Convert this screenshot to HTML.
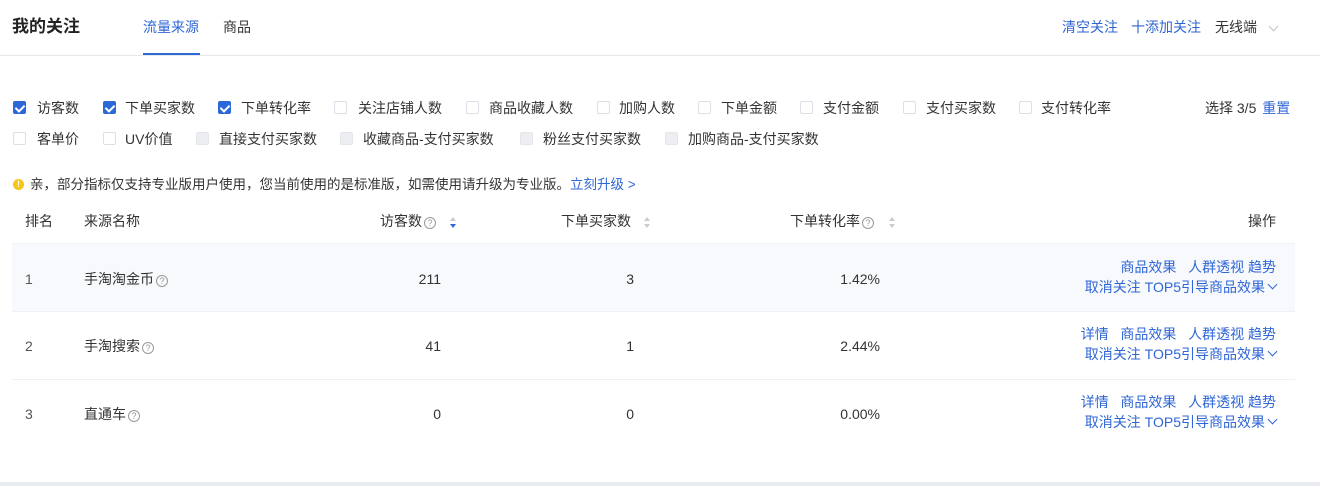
<!DOCTYPE html>
<html><head><meta charset="utf-8"><style>
*{margin:0;padding:0;box-sizing:border-box}
body{width:1320px;height:486px;background:#fff;position:relative;overflow:hidden;font-family:"Liberation Sans","Noto Sans CJK SC",sans-serif;font-size:14px;color:#333}
.a{position:absolute;white-space:nowrap;line-height:20px}
.b{color:#2f66d6}
.cb{position:absolute;width:13px;height:13px;border:1px solid #dcdfe6;border-radius:2px;background:#fff}
.cb.on{background:#2d68d8;border-color:#2d68d8}
.cb.on:after{content:"";position:absolute;left:3px;top:1px;width:4px;height:7px;border:solid #fff;border-width:0 2px 2px 0;transform:rotate(45deg)}
.cb.dis{background:#eceef1;border-color:#e4e6ea}
.q{display:inline-block;width:12px;height:12px;border:1px solid #999;border-radius:50%;font-size:9px;line-height:10px;text-align:center;color:#999;vertical-align:0px;margin-left:2px}
.s{position:absolute;width:7px;height:11px}
.s:before,.s:after{content:"";position:absolute;left:0;border-left:3.5px solid transparent;border-right:3.5px solid transparent}
.s:before{top:0;border-bottom:4px solid #c8ccd3}
.s:after{bottom:0;border-top:4px solid #c8ccd3}
.s.d:after{border-top-color:#2d68d8}
.hr{position:absolute;left:12px;width:1283px;height:1px;background:#eef0f3}
.ch{display:inline-block;width:7px;height:7px;border:solid #2f66d6;border-width:0 1px 1px 0;transform:rotate(45deg);vertical-align:4px;margin-left:4px;margin-right:2px}
</style></head><body>
<div class="a" style="left:12px;top:16px;font-size:17px;font-weight:bold;line-height:22px;color:#222">我的关注</div>
<div class="a b" style="left:143px;top:17px">流量来源</div>
<div class="a" style="left:223px;top:17px">商品</div>
<div style="position:absolute;left:143px;top:53px;width:57px;height:2px;background:#2d68d8"></div>
<div style="position:absolute;left:0;top:55px;width:1320px;height:1px;background:#e6e8eb"></div>
<div class="a b" style="left:1062px;top:17px">清空关注</div>
<div class="a b" style="left:1131px;top:17px">十添加关注</div>
<div class="a" style="left:1215px;top:17px">无线端</div>
<div style="position:absolute;left:1270px;top:23px;width:7px;height:7px;border:solid #c0c4cc;border-width:0 1px 1px 0;transform:rotate(45deg)"></div>

<div class="cb on" style="left:13px;top:101px"></div><div class="a" style="left:37px;top:98px">访客数</div>
<div class="cb on" style="left:103px;top:101px"></div><div class="a" style="left:125px;top:98px">下单买家数</div>
<div class="cb on" style="left:218px;top:101px"></div><div class="a" style="left:241px;top:98px">下单转化率</div>
<div class="cb" style="left:334px;top:101px"></div><div class="a" style="left:358px;top:98px">关注店铺人数</div>
<div class="cb" style="left:466px;top:101px"></div><div class="a" style="left:489px;top:98px">商品收藏人数</div>
<div class="cb" style="left:597px;top:101px"></div><div class="a" style="left:619px;top:98px">加购人数</div>
<div class="cb" style="left:698px;top:101px"></div><div class="a" style="left:721px;top:98px">下单金额</div>
<div class="cb" style="left:800px;top:101px"></div><div class="a" style="left:823px;top:98px">支付金额</div>
<div class="cb" style="left:903px;top:101px"></div><div class="a" style="left:926px;top:98px">支付买家数</div>
<div class="cb" style="left:1019px;top:101px"></div><div class="a" style="left:1041px;top:98px">支付转化率</div>
<div class="a" style="left:1205px;top:98px">选择 3/5 <span class="b" style="margin-left:2px">重置</span></div>

<div class="cb" style="left:13px;top:132px"></div><div class="a" style="left:37px;top:129px">客单价</div>
<div class="cb" style="left:103px;top:132px"></div><div class="a" style="left:125px;top:129px">UV价值</div>
<div class="cb dis" style="left:196px;top:132px"></div><div class="a" style="left:219px;top:129px">直接支付买家数</div>
<div class="cb dis" style="left:340px;top:132px"></div><div class="a" style="left:363px;top:129px">收藏商品-支付买家数</div>
<div class="cb dis" style="left:520px;top:132px"></div><div class="a" style="left:543px;top:129px">粉丝支付买家数</div>
<div class="cb dis" style="left:665px;top:132px"></div><div class="a" style="left:688px;top:129px">加购商品-支付买家数</div>

<div style="position:absolute;left:13px;top:179px;width:11px;height:11px;border-radius:50%;background:#f5c518;color:#fff;font-size:9px;line-height:11px;text-align:center;font-weight:bold">!</div>
<div class="a" style="left:30px;top:175px;font-size:13.5px">亲，部分指标仅支持专业版用户使用，您当前使用的是标准版，如需使用请升级为专业版。<span class="b">立刻升级 &gt;</span></div>

<div class="a" style="left:25px;top:211px">排名</div>
<div class="a" style="left:84px;top:211px">来源名称</div>
<div class="a" style="left:380px;top:211px">访客数<span class="q">?</span></div><div class="s d" style="left:450px;top:217px"></div>
<div class="a" style="left:561px;top:211px">下单买家数</div><div class="s" style="left:644px;top:217px"></div>
<div class="a" style="left:790px;top:211px">下单转化率<span class="q">?</span></div><div class="s" style="left:889px;top:217px"></div>
<div class="a" style="right:44px;top:211px">操作</div>

<div style="position:absolute;left:12px;top:244px;width:1283px;height:67px;background:#f7f9fc"></div>
<div class="hr" style="top:243px;background:#f1f3f6"></div>
<div class="hr" style="top:311px"></div>
<div class="hr" style="top:379px"></div>

<div class="a" style="left:25px;top:269px;color:#555">1</div>
<div class="a" style="left:84px;top:269px">手淘淘金币<span class="q">?</span></div>
<div class="a" style="right:879px;top:269px">211</div>
<div class="a" style="right:686px;top:269px">3</div>
<div class="a" style="right:440px;top:269px">1.42%</div>
<div class="a b" style="right:44px;top:257px">商品效果 &nbsp; 人群透视 趋势</div>
<div class="a b" style="right:42px;top:277px">取消关注 TOP5引导商品效果<span class="ch"></span></div>

<div class="a" style="left:25px;top:336px;color:#555">2</div>
<div class="a" style="left:84px;top:336px">手淘搜索<span class="q">?</span></div>
<div class="a" style="right:879px;top:336px">41</div>
<div class="a" style="right:686px;top:336px">1</div>
<div class="a" style="right:440px;top:336px">2.44%</div>
<div class="a b" style="right:44px;top:324px">详情 &nbsp; 商品效果 &nbsp; 人群透视 趋势</div>
<div class="a b" style="right:42px;top:344px">取消关注 TOP5引导商品效果<span class="ch"></span></div>

<div class="a" style="left:25px;top:404px;color:#555">3</div>
<div class="a" style="left:84px;top:404px">直通车<span class="q">?</span></div>
<div class="a" style="right:879px;top:404px">0</div>
<div class="a" style="right:686px;top:404px">0</div>
<div class="a" style="right:440px;top:404px">0.00%</div>
<div class="a b" style="right:44px;top:392px">详情 &nbsp; 商品效果 &nbsp; 人群透视 趋势</div>
<div class="a b" style="right:42px;top:412px">取消关注 TOP5引导商品效果<span class="ch"></span></div>

<div style="position:absolute;left:0;top:482px;width:1320px;height:4px;background:#e9edf1"></div>
</body></html>
